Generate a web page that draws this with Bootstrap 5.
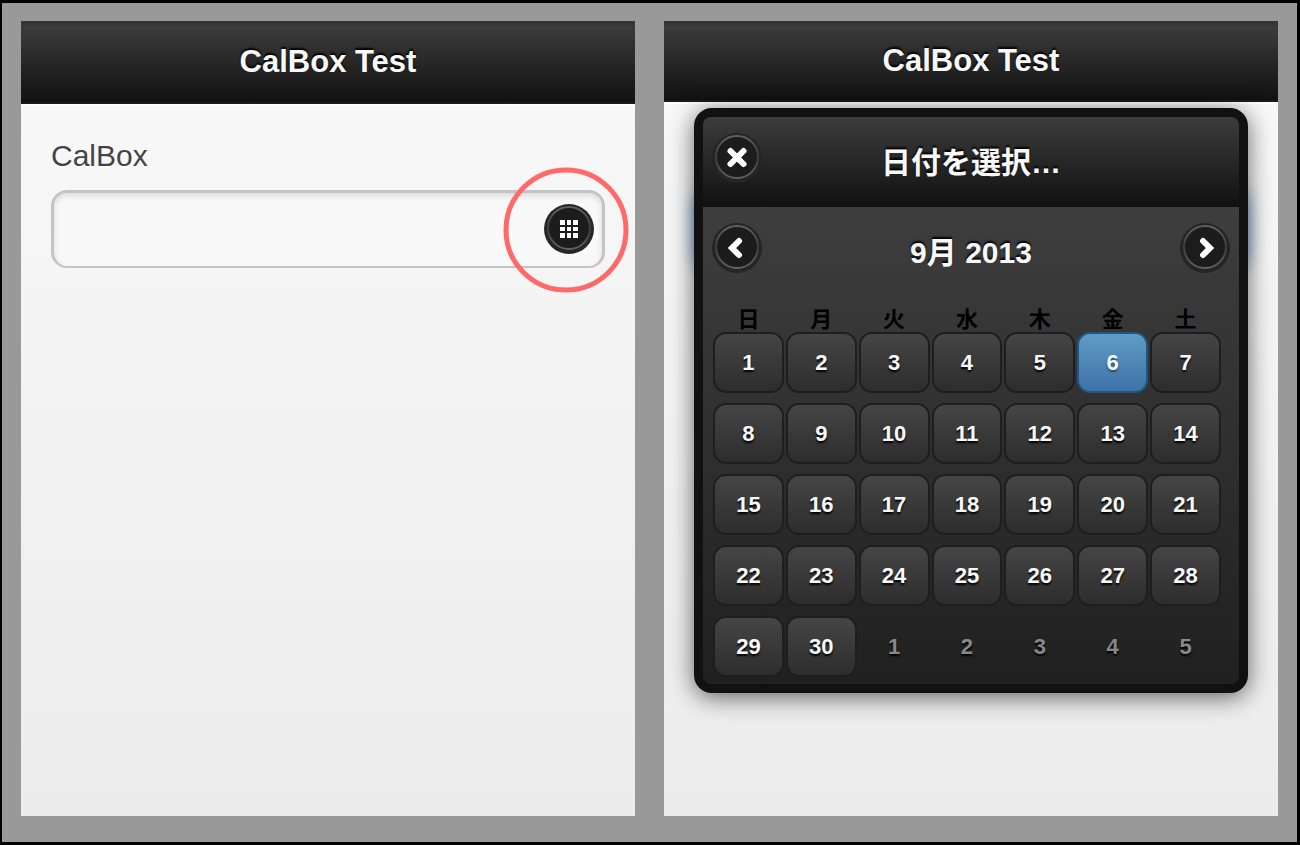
<!DOCTYPE html>
<html lang="ja">
<head>
<meta charset="utf-8">
<meta name="viewport" content="width=device-width, initial-scale=1">
<title>CalBox Test</title>
<link href="https://cdn.jsdelivr.net/npm/bootstrap@5.3.0/dist/css/bootstrap.min.css" rel="stylesheet">
<style>
body { background: #999; font-family: "Liberation Sans", "Noto Sans CJK JP", sans-serif; color: #333; }
.stage { min-height: 100vh; border: 3px solid #000; border-left-width: 2px; padding: 18px 19px 26px; gap: 29px; }
.screen { flex: 1 1 0; min-width: 0; background: linear-gradient(#f9f9f9, #ececec); }
.bar { height: 83px; background: linear-gradient(#333, #3b3b3b 8%, #111); border-bottom: 2px solid #1a1a1a; box-shadow: 0 2px 0 #fff; }
.bar-short { height: 81px; }
.title-text { font-size: 30px; line-height: 36px; font-weight: 700; color: #f8f8f8; text-shadow: 0 -2px 2px #000; margin: 0; }
.bar .title-text { font-size: 31px; }
.form-area { padding: 34px 30px 0; }
.behind-area { padding: 88px 36px 0; }
.field-label { font-size: 30px; line-height: 36px; margin-bottom: 16px; color: #444; text-shadow: 0 2px 0 #fff; }
.date-input { height: 78px; border: 3px solid #c4c4c4; border-bottom-width: 2px; border-radius: 16px; background: #f9f9f9; box-shadow: inset 0 3px 6px rgba(0,0,0,.12); padding: 0 70px 0 16px; font-size: 30px; }
.date-input.lit { border-color: #5b87b0; box-shadow: 0 0 18px 3px #387bbe; }
.round-btn { width: 50px; height: 50px; padding: 0; border: 0; background: none; display: block; }
.round-btn svg { display: block; }
.grid-btn { position: absolute; right: 11px; top: 14px; }
.ring { position: absolute; right: -24px; top: -23px; pointer-events: none; z-index: 2; }
.dialog-box { position: absolute; top: 6px; left: 30px; right: 30px; border: 9px solid #111; border-radius: 18px; background: #111; box-shadow: 0 4px 24px rgba(0,0,0,.6); }
.dialog-top { height: 90px; padding: 0 9px; background: linear-gradient(#3c3c3c, #111); border-radius: 8px 8px 0 0; }
.dialog-top .title-text { padding-top: 2px; }
.dialog-main { background: linear-gradient(#3e3e3e, #202020); border-radius: 0 0 8px 8px; padding: 16px 9px 0; }
.dialog-main .title-text { padding-top: 10px; }
.days { width: calc(100% - 8px); table-layout: fixed; border-collapse: separate; border-spacing: 0; margin-top: 35px; }
.days th { font-size: 22px; line-height: 24px; height: 24px; padding: 0; color: #000; text-align: center; }
.days td { padding: 0 1px 10px; text-align: center; }
.days tr:last-child td { padding-bottom: 7px; }
.day { display: block; width: 100%; height: 61px; padding: 0; border: 2px solid #1e1e1e; border-radius: 13px; background: linear-gradient(#454545, #2d2d2d); font-size: 22px; line-height: 24px; font-weight: 700; color: #f8f8f8; text-shadow: 0 2px 2px #000; }
.day.picked { border-color: #1f5580; background: linear-gradient(#5f9cc5, #3f72a8); text-shadow: 0 2px 2px #145072; }
.day.out { border-color: transparent; background: none; color: #888; }
</style>
</head>
<body>
<svg width="0" height="0" class="position-absolute" aria-hidden="true">
  <defs>
    <linearGradient id="rim" x1="0" y1="0" x2="0" y2="1"><stop offset="0" stop-color="#606060"/><stop offset="0.5" stop-color="#3c3c3c"/><stop offset="1" stop-color="#626262"/></linearGradient>
    <symbol id="disc" viewBox="0 0 50 50">
      <circle cx="25" cy="25" r="25" fill="#252525"/>
      <circle cx="25" cy="24" r="21" fill="#1c1c1c" stroke="url(#rim)" stroke-width="2"/>
    </symbol>
  </defs>
</svg>
<div class="stage d-flex">
  <section class="screen">
    <header class="bar d-flex align-items-center justify-content-center"><h1 class="title-text">CalBox Test</h1></header>
    <main class="form-area">
      <label class="field-label d-block" for="calbox">CalBox</label>
      <div class="position-relative">
        <input class="date-input form-control" id="calbox" type="text">
        <button class="round-btn grid-btn" type="button" aria-label="Open calendar">
          <svg width="50" height="50" viewBox="0 0 50 50"><use href="#disc"/><path fill="#777" d="M17 17h16v16H17z"/><path stroke="#1c1c1c" stroke-width="2" d="M22 16v18M28 16v18M16 22h18M16 28h18"/><path fill="#fff" d="M16 16h5v5h-5zM23 16h4v5h-4zM29 16h5v5h-5zM16 23h5v4h-5zM23 23h4v4h-4zM29 23h5v4h-5zM16 29h5v5h-5zM23 29h4v5h-4zM29 29h5v5h-5z"/></svg>
        </button>
        <svg class="ring" width="126" height="126" viewBox="0 0 126 126" aria-hidden="true"><circle cx="63" cy="63" r="60" fill="none" stroke="#ff6969" stroke-width="5"/></svg>
      </div>
    </main>
  </section>
  <section class="screen">
    <header class="bar bar-short d-flex align-items-center justify-content-center"><h1 class="title-text">CalBox Test</h1></header>
    <main class="position-relative behind-area">
      <input class="date-input lit form-control" type="text" aria-label="CalBox">
      <div class="dialog-box" role="dialog" aria-labelledby="dialog-title">
        <div class="dialog-top d-flex align-items-center">
          <button class="round-btn mb-2" type="button" aria-label="Close">
            <svg width="50" height="50" viewBox="0 0 50 50"><use href="#disc"/><path d="M18.500 18l13 13M31.500 18l-13 13" stroke="#fff" stroke-width="6" stroke-linecap="round"/></svg>
          </button>
          <h2 class="title-text flex-fill text-center" id="dialog-title">日付を選択…</h2>
          <div class="round-btn"></div>
        </div>
        <div class="dialog-main">
          <div class="d-flex align-items-center">
            <button class="round-btn" type="button" aria-label="Previous month">
              <svg width="50" height="50" viewBox="0 0 50 50"><use href="#disc"/><path d="M27 18l-7 7 7 7" fill="none" stroke="#fff" stroke-width="6" stroke-linecap="round" stroke-linejoin="miter"/></svg>
            </button>
            <h3 class="title-text flex-fill text-center">9月 2013</h3>
            <button class="round-btn" type="button" aria-label="Next month">
              <svg width="50" height="50" viewBox="0 0 50 50"><use href="#disc"/><path d="M23 18l7 7-7 7" fill="none" stroke="#fff" stroke-width="6" stroke-linecap="round" stroke-linejoin="miter"/></svg>
            </button>
          </div>
          <table class="days">
            <thead><tr><th>日</th><th>月</th><th>火</th><th>水</th><th>木</th><th>金</th><th>土</th></tr></thead>
            <tbody>
              <tr><td><button class="day">1</button></td><td><button class="day">2</button></td><td><button class="day">3</button></td><td><button class="day">4</button></td><td><button class="day">5</button></td><td><button class="day picked">6</button></td><td><button class="day">7</button></td></tr>
              <tr><td><button class="day">8</button></td><td><button class="day">9</button></td><td><button class="day">10</button></td><td><button class="day">11</button></td><td><button class="day">12</button></td><td><button class="day">13</button></td><td><button class="day">14</button></td></tr>
              <tr><td><button class="day">15</button></td><td><button class="day">16</button></td><td><button class="day">17</button></td><td><button class="day">18</button></td><td><button class="day">19</button></td><td><button class="day">20</button></td><td><button class="day">21</button></td></tr>
              <tr><td><button class="day">22</button></td><td><button class="day">23</button></td><td><button class="day">24</button></td><td><button class="day">25</button></td><td><button class="day">26</button></td><td><button class="day">27</button></td><td><button class="day">28</button></td></tr>
              <tr><td><button class="day">29</button></td><td><button class="day">30</button></td><td><button class="day out">1</button></td><td><button class="day out">2</button></td><td><button class="day out">3</button></td><td><button class="day out">4</button></td><td><button class="day out">5</button></td></tr>
            </tbody>
          </table>
        </div>
      </div>
    </main>
  </section>
</div>
<script src="https://cdn.jsdelivr.net/npm/bootstrap@5.3.0/dist/js/bootstrap.bundle.min.js"></script>
</body>
</html>
